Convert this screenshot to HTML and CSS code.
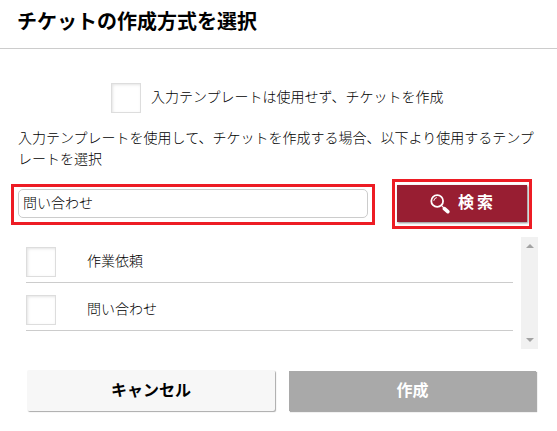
FILE: index.html
```html
<!DOCTYPE html>
<html lang="ja">
<head>
<meta charset="utf-8">
<title>チケットの作成方式を選択</title>
<link rel="stylesheet" href="styles.css">
</head>
<body>
<header class="header"><h1>チケットの作成方式を選択</h1></header>
<main>
  <label class="blank-option"><span class="check"></span><span>入力テンプレートは使用せず、チケットを作成</span></label>
  <p class="lead">入力テンプレートを使用して、チケットを作成する場合、以下より使用するテンプレートを選択</p>
  <div class="search">
    <div class="mark mark-input"><input class="keyword" type="text" value="問い合わせ"></div>
    <div class="mark mark-button">
      <button class="search-button" type="button">
        <svg width="20" height="20" viewBox="0 0 20 20" fill="none" stroke="#fff">
          <circle cx="7.2" cy="7" r="5.9" stroke-width="1.8"/>
          <path d="M3.8 6.8A3.6 3.6 0 0 1 6.8 3.6" stroke-width="1"/>
          <path d="M11.4 11.4l2.4 2.4" stroke-width="1.2"/>
          <path d="M14.4 14.6l3.4 3.1" stroke-width="3.6" stroke-linecap="round"/>
        </svg>
        <span>検索</span>
      </button>
    </div>
  </div>
  <div class="list">
    <ul class="rows">
      <li><span class="check"></span><span>作業依頼</span></li>
      <li><span class="check"></span><span>問い合わせ</span></li>
    </ul>
    <div class="scrollbar"><i class="up"></i><i class="down"></i></div>
  </div>
</main>
<footer class="actions">
  <button class="cancel" type="button">キャンセル</button>
  <button class="create" type="button">作成</button>
</footer>
</body>
</html>
```
FILE: styles.css
```css
* { box-sizing: border-box; }
body {
  margin: 0;
  height: 431px;
  overflow: hidden;
  background: #fff;
  color: #000;
  font: 300 14px/21px "Noto Sans CJK JP", sans-serif;
}
button, input { font-family: inherit; margin: 0; }
.header {
  height: 49px;
  padding: 6px 17px 0;
  border-bottom: 1px solid #ccc;
}
h1 { margin: 0; font-size: 20px; line-height: 30px; font-weight: 700; }
.check {
  flex: none;
  width: 30px;
  height: 30px;
  border: 1px solid #ddd;
  background: #fff;
  box-shadow: inset 1px 1px 3px #e4e4e4;
}
.blank-option {
  display: flex;
  gap: 10px;
  margin: 34px 0 0 111px;
  line-height: 26px;
}
.lead { width: 519px; margin: 14px 0 0 18px; }
.search {
  display: flex;
  align-items: flex-start;
  gap: 17px;
  margin: 10px 0 0 11px;
}
.mark { border: 3px solid #ed1c24; }
.mark-input {
  width: 364px;
  height: 41px;
  margin-top: 5px;
  padding: 2px 4px;
}
.keyword {
  display: block;
  width: 350px;
  height: 29px;
  padding: 0 4px 3px;
  border: 1px solid #ccc;
  border-radius: 5px;
  background: #fff;
  color: #000;
  font-size: 14px;
  font-weight: 300;
  outline: none;
}
.mark-button { width: 140px; height: 50px; padding: 3px 2px; }
.search-button {
  display: flex;
  align-items: flex-start;
  gap: 8px;
  width: 130px;
  height: 37px;
  padding: 9px 0 0 33px;
  border: 0;
  background: #981e32;
  box-shadow: 1px 1px 2px #888;
  color: #fff;
  font-size: 16px;
  line-height: 14px;
  font-weight: 700;
  letter-spacing: 3px;
}
.list { display: flex; height: 112px; margin: 8px 0 0 26px; }
.rows { width: 487px; margin: 0 8px 0 0; padding: 0; list-style: none; }
.rows li {
  display: flex;
  gap: 31px;
  height: 48px;
  padding-top: 12px;
  border-bottom: 1px solid #ccc;
  line-height: 26px;
}
.rows li:first-child { height: 46px; padding-top: 10px; }
.scrollbar {
  display: flex;
  flex-direction: column;
  justify-content: space-between;
  align-items: center;
  width: 17px;
  padding: 7px 0;
  background: #f1f1f1;
}
.scrollbar i { border: 4px solid transparent; }
.up { border-top: 0 !important; border-bottom-color: #a3a3a3 !important; }
.down { border-bottom: 0 !important; border-top-color: #a3a3a3 !important; }
.actions { display: flex; gap: 14px; margin: 21px 0 0 27px; }
.actions button {
  width: 248px;
  height: 41px;
  padding: 0 0 4px;
  border: 0;
  box-shadow: 1px 1px 1px #aaa;
  font-size: 16px;
  line-height: 24px;
  font-weight: 700;
}
.actions .cancel { border-radius: 2px; background: #f7f7f7; color: #000; }
.actions .create { width: 247px; height: 40px; margin-top: 1px; background: #a9a9a9; color: #fff; }
```
